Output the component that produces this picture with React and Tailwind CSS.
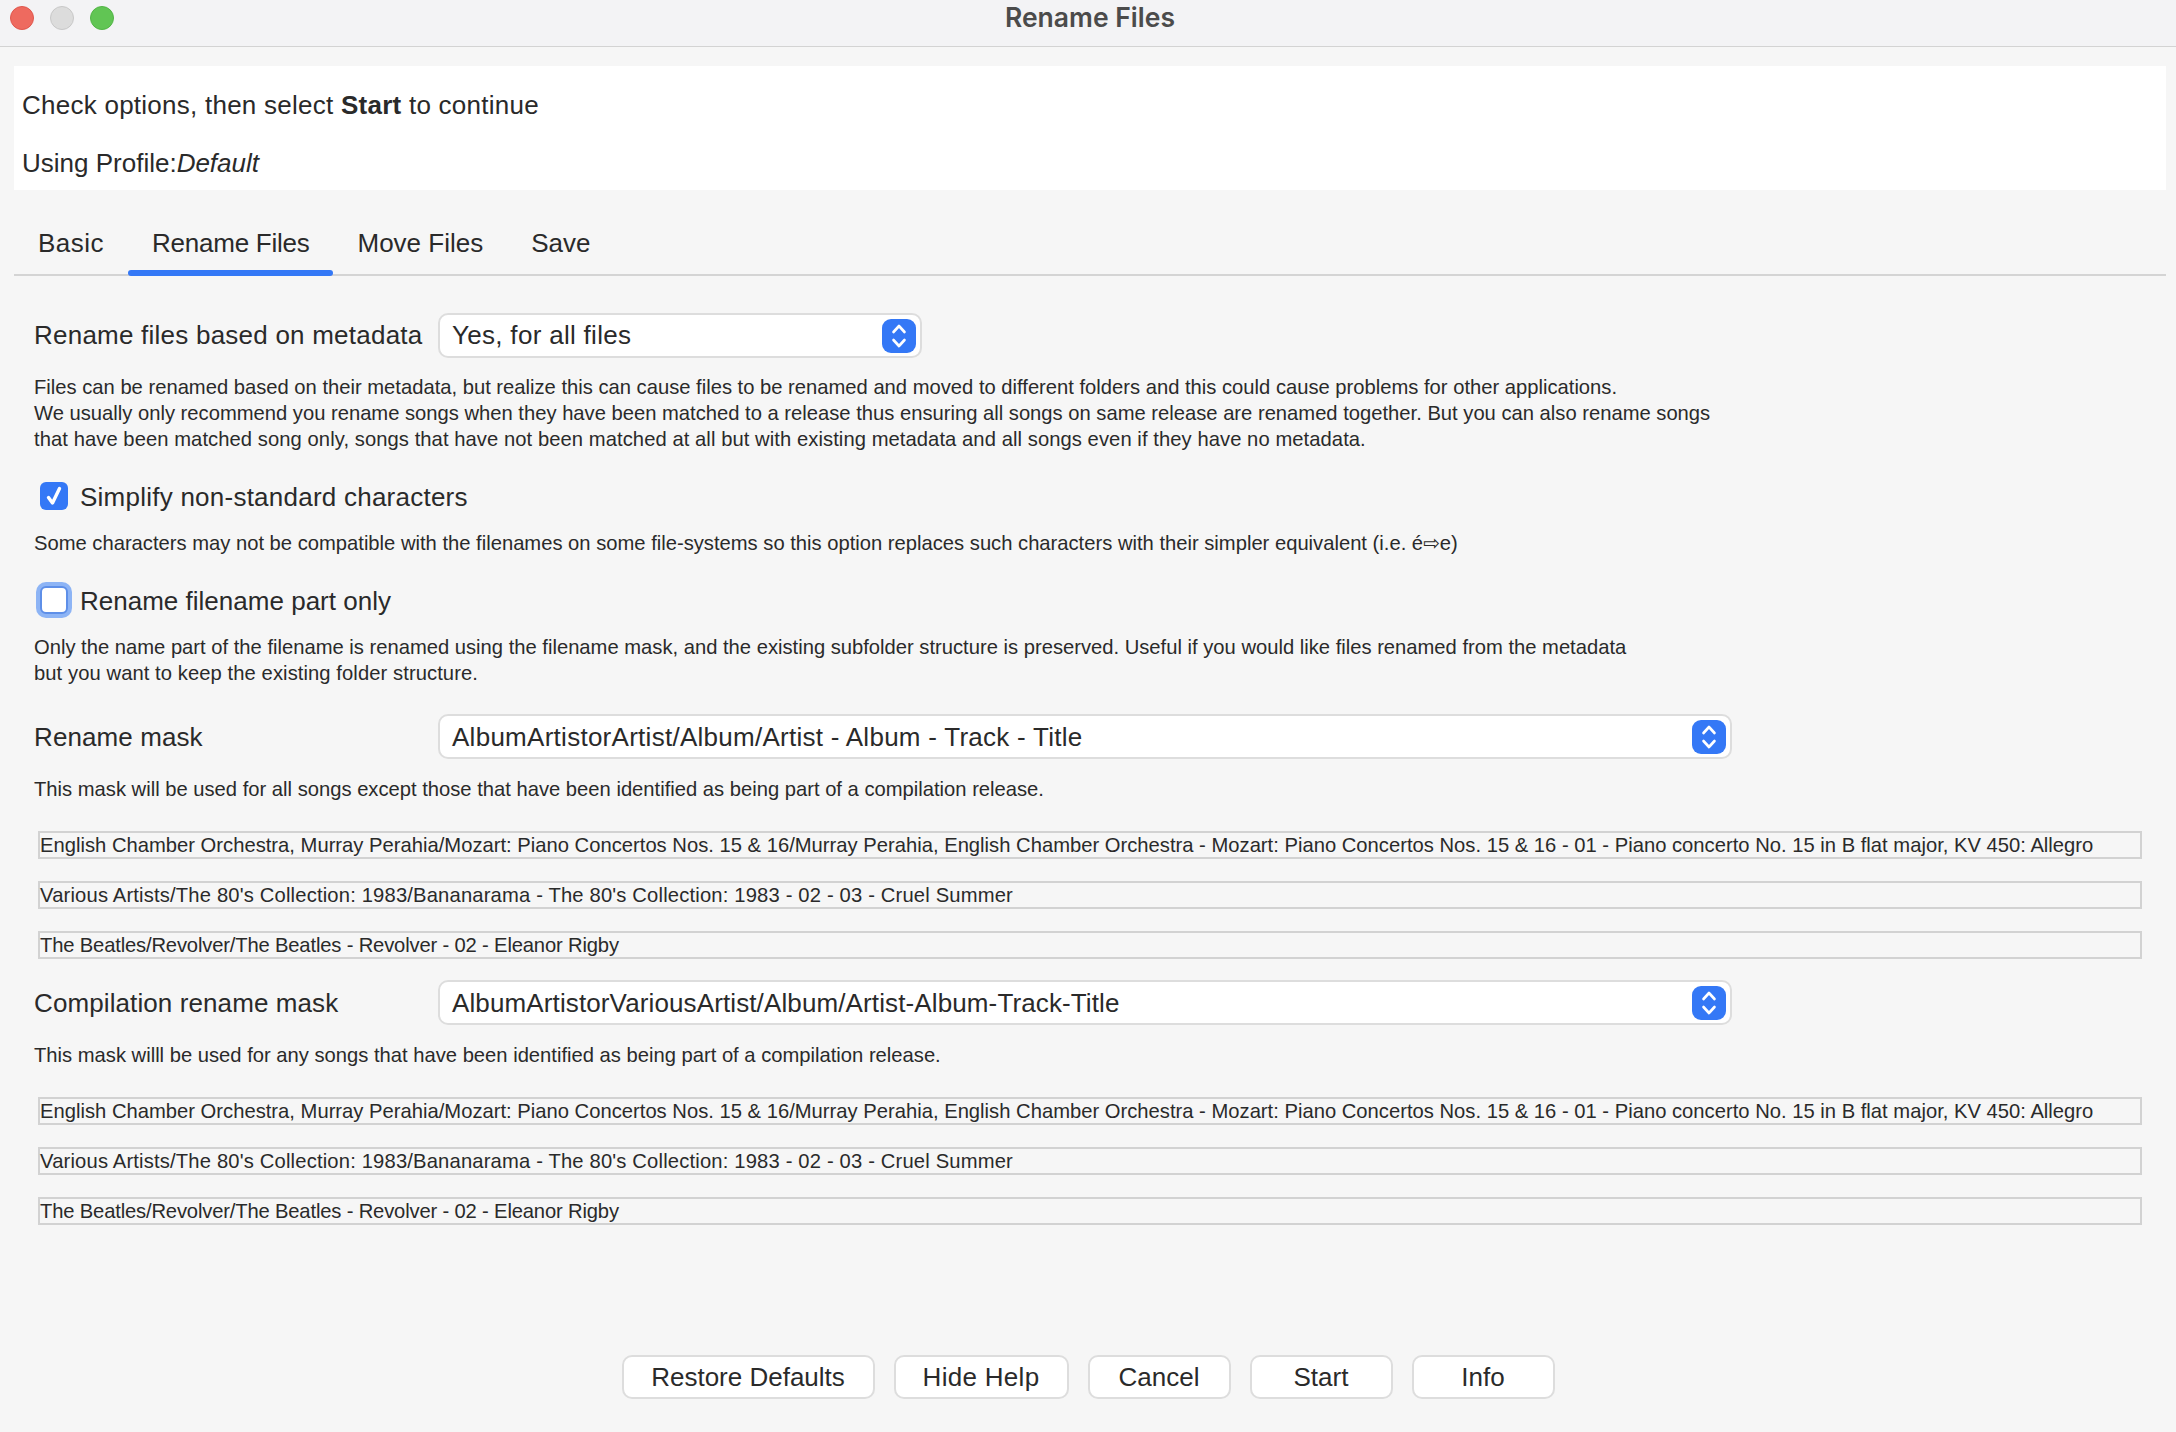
import React from "react";

const sans = "font-['Liberation_Sans','DejaVu_Sans',sans-serif]";

const examples = [
  {
    text: "English Chamber Orchestra, Murray Perahia/Mozart: Piano Concertos Nos. 15 & 16/Murray Perahia, English Chamber Orchestra - Mozart: Piano Concertos Nos. 15 & 16 - 01 - Piano concerto No. 15 in B flat major, KV 450: Allegro",
    tracking: "tracking-[0.01px]",
  },
  {
    text: "Various Artists/The 80's Collection: 1983/Bananarama - The 80's Collection: 1983 - 02 - 03 - Cruel Summer",
    tracking: "tracking-[0.17px]",
  },
  {
    text: "The Beatles/Revolver/The Beatles - Revolver - 02 - Eleanor Rigby",
    tracking: "tracking-[-0.16px]",
  },
];

function Stepper() {
  return (
    <span className="flex h-[34px] w-[34px] items-center justify-center rounded-[9px] bg-[#3478f6]">
      <svg width="18" height="26" viewBox="0 0 18 26" fill="none" stroke="white" strokeWidth="2.6" strokeLinecap="round" strokeLinejoin="round">
        <path d="M3.5 9 L9 3 L14.5 9" />
        <path d="M3.5 17 L9 23 L14.5 17" />
      </svg>
    </span>
  );
}

function Select({ label, value, width, labelTracking, valueTracking, lift }) {
  return (
    <div className="flex items-center">
      <div className={`w-[404px] text-[26px] leading-[30px] text-[#2a2a2a] ${labelTracking} ${lift ? "-mt-[2px]" : ""}`}>{label}</div>
      <div className={`flex h-[45px] items-center justify-between rounded-[10px] border-2 border-[#dddddd] bg-white pl-[12px] pr-[4px] text-[26px] leading-[30px] text-[#2a2a2a] ${width}`}>
        <span className={`${valueTracking} ${lift ? "-mt-[1px]" : ""}`}>{value}</span>
        <Stepper />
      </div>
    </div>
  );
}

function Help({ className, children }) {
  return <p className={`text-[20.2px] leading-[26px] text-[#2a2a2a] ${className}`}>{children}</p>;
}

function Examples({ className }) {
  return (
    <div className={`ml-[4px] flex w-[2104px] flex-col gap-[22px] ${className}`}>
      {examples.map((row) => (
        <div key={row.text} className={`h-[28px] whitespace-nowrap border-2 border-[#d2d2d2] text-[20.2px] leading-[24px] text-[#2a2a2a] ${row.tracking}`}>
          {row.text}
        </div>
      ))}
    </div>
  );
}

function Check({ checked, focused, label, className, tracking }) {
  return (
    <div className={`flex h-[28px] items-center ${className}`}>
      <div className="ml-[6px] mr-[12px]">
        {checked ? (
          <span className="flex h-[28px] w-[28px] items-center justify-center rounded-[6px] bg-[#3478f6]">
            <svg width="22" height="22" viewBox="0 0 22 22" fill="none" stroke="white" strokeWidth="3.4" strokeLinecap="round" strokeLinejoin="round">
              <path d="M5.5 12.5 L9.5 18 L16.5 3.5" />
            </svg>
          </span>
        ) : (
          <span className={`block h-[28px] w-[28px] rounded-[6px] border-2 bg-white ${focused ? "border-[#5e8fe8] shadow-[0_0_0_4px_#8db4f5]" : "border-[#cccccc]"}`} />
        )}
      </div>
      <span className={`mt-[2px] text-[26px] leading-[30px] text-[#2a2a2a] ${tracking}`}>{label}</span>
    </div>
  );
}

function Tab({ label, active, tracking }) {
  return (
    <div className={`relative -mb-[2px] h-[62px] px-[24px] pt-[14px] text-[26px] leading-[30px] text-[#2a2a2a] ${tracking}`}>
      {label}
      {active && <span className="absolute bottom-0 left-0 right-0 h-[6px] rounded-[3px] bg-[#3478f6]" />}
    </div>
  );
}

function Button({ label, width, tracking }) {
  return (
    <div className={`flex h-[44px] items-center justify-center rounded-[10px] border-2 border-[#dddddd] bg-white text-[26px] text-[#2a2a2a] ${width} ${tracking}`}>
      {label}
    </div>
  );
}

export default function App() {
  return (
    <div className={`flex h-[1432px] w-[2176px] flex-col overflow-hidden bg-[#f6f6f6] ${sans}`}>
      {/* title bar */}
      <div className="flex h-[47px] shrink-0 items-center border-b border-[#d3d3d3] bg-[#f3f3f5] pl-[10px]">
        <div className="-mt-[10px] flex w-[104px] gap-[16px]">
          <span className="h-[24px] w-[24px] rounded-full border border-[#e0574d] bg-[#ee6a5f]" />
          <span className="h-[24px] w-[24px] rounded-full border border-[#c8c8c8] bg-[#dcdcdc]" />
          <span className="h-[24px] w-[24px] rounded-full border border-[#52b546] bg-[#61c554]" />
        </div>
        <div className="ml-[891px] -mt-[13px] font-['Inter',sans-serif] text-[26.5px] font-semibold leading-[30px] text-[#4b4b4b]">Rename Files</div>
      </div>

      {/* intro */}
      <div className="ml-[14px] mr-[10px] mt-[19px] h-[124px] shrink-0 bg-white pl-[8px] pt-[24px] text-[26px] leading-[30px] text-[#2a2a2a]">
        <div className="tracking-[0.25px]">
          Check options, then select <b>Start</b> to continue
        </div>
        <div className="mt-[28px]">
          Using Profile:<i>Default</i>
        </div>
      </div>

      {/* tabs */}
      <div className="ml-[14px] mr-[10px] mt-[24px] flex h-[62px] shrink-0 border-b-2 border-[#d4d4d4]">
        <Tab label="Basic" tracking="tracking-[0.5px]" />
        <Tab label="Rename Files" active tracking="tracking-[-0.25px]" />
        <Tab label="Move Files" />
        <Tab label="Save" />
      </div>

      <div className="pl-[34px]">
        <div className="mt-[37px]">
          <Select
            lift
            label="Rename files based on metadata"
            value="Yes, for all files"
            width="w-[484px]"
            labelTracking="tracking-[0.23px]"
            valueTracking="tracking-[0.3px]"
          />
        </div>
        <Help className="mt-[16px]">
          Files can be renamed based on their metadata, but realize this can cause files to be renamed and moved to different folders and this could cause problems for other applications.
          <br />
          We usually only recommend you rename songs when they have been matched to a release thus ensuring all songs on same release are renamed together. But you can also rename songs
          <br />
          <span className="tracking-[0.07px]">that have been matched song only, songs that have not been matched at all but with existing metadata and all songs even if they have no metadata.</span>
        </Help>

        <Check checked label="Simplify non-standard characters" className="mt-[30px]" tracking="tracking-[0.24px]" />
        <Help className="mt-[20px]">
          Some characters may not be compatible with the filenames on some file-systems so this option replaces such characters with their simpler equivalent (i.e. é<span className="font-['DejaVu_Sans'] text-[20px] leading-[20px]">⇨</span>e)
        </Help>

        <Check focused label="Rename filename part only" className="mt-[30px]" tracking="tracking-[0.01px]" />
        <Help className="mt-[20px]">
          Only the name part of the filename is renamed using the filename mask, and the existing subfolder structure is preserved. Useful if you would like files renamed from the metadata
          <br />
          <span className="tracking-[0.08px]">but you want to keep the existing folder structure.</span>
        </Help>

        <div className="mt-[28px]">
          <Select
            label="Rename mask"
            value="AlbumArtistorArtist/Album/Artist - Album - Track - Title"
            width="w-[1294px]"
            labelTracking="tracking-[0.1px]"
            valueTracking="tracking-[0.27px]"
          />
        </div>
        <Help className="mt-[17px]">This mask will be used for all songs except those that have been identified as being part of a compilation release.</Help>
        <Examples className="mt-[29px]" />

        <div className="mt-[21px]">
          <Select
            label="Compilation rename mask"
            value="AlbumArtistorVariousArtist/Album/Artist-Album-Track-Title"
            width="w-[1294px]"
            labelTracking="tracking-[0.1px]"
            valueTracking="tracking-[0.12px]"
          />
        </div>
        <Help className="mt-[17px]">This mask willl be used for any songs that have been identified as being part of a compilation release.</Help>
        <Examples className="mt-[29px]" />
      </div>

      {/* footer buttons */}
      <div className="mt-auto flex justify-center gap-[19px] pb-[33px]">
        <Button label="Restore Defaults" width="w-[253px]" />
        <Button label="Hide Help" width="w-[175px]" tracking="tracking-[0.3px]" />
        <Button label="Cancel" width="w-[143px]" />
        <Button label="Start" width="w-[143px]" />
        <Button label="Info" width="w-[143px]" />
      </div>
    </div>
  );
}
